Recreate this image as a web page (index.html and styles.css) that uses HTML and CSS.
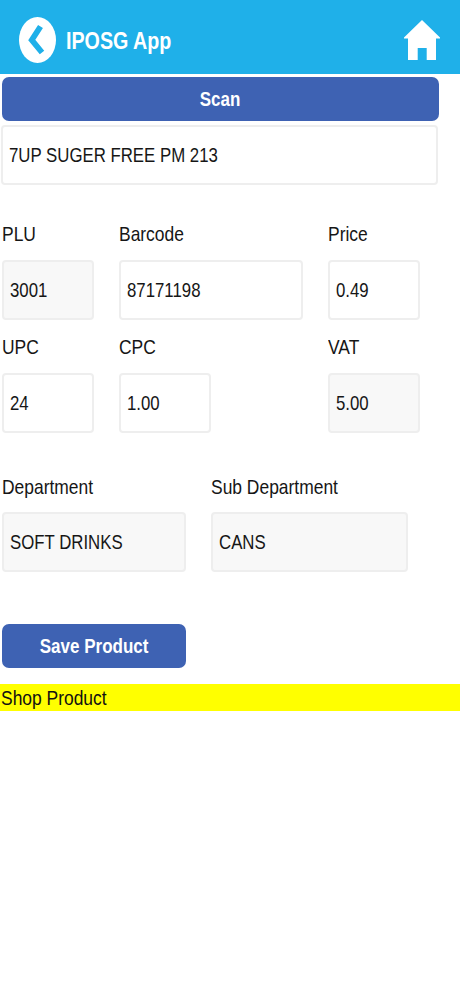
FILE: index.html
```html
<!DOCTYPE html>
<html lang="en">
<head>
<meta charset="utf-8">
<title>IPOSG App</title>
<link rel="stylesheet" href="styles.css">
</head>
<body>
<header class="topbar">
  <div class="topbar-left">
    <svg class="back-icon" viewBox="0 0 37 46" width="37" height="46" aria-hidden="true">
      <ellipse cx="18.5" cy="23" rx="18.5" ry="23" fill="#fff"/>
      <path d="M21.500 9.500 L12.800 23 L23 35.500" fill="none" stroke="#1fb0e9" stroke-width="5.800"/>
    </svg>
    <span class="app-title">IPOSG App</span>
  </div>
  <svg class="home-icon" viewBox="0 0 36 40" width="36" height="40" aria-hidden="true">
    <path fill="#fff" d="M18 0 L36 17.500 L36 18.500 L32 18.500 L32 40 L22.700 40 L22.700 28 L13.700 28 L13.700 40 L4 40 L4 18.500 L0 18.500 L0 17.500 Z"/>
  </svg>
</header>
<main class="content">
  <button class="btn btn-scan" type="button"><span class="btn-text">Scan</span></button>
  <div class="box box-name"><span class="val">7UP SUGER FREE PM 213</span></div>

  <section class="grid grid-top">
    <div class="field"><label class="lbl"><span class="lbl-text">PLU</span></label><div class="box box-small readonly"><span class="val">3001</span></div></div>
    <div class="field"><label class="lbl"><span class="lbl-text">Barcode</span></label><div class="box box-small"><span class="val">87171198</span></div></div>
    <div class="field"><label class="lbl"><span class="lbl-text">Price</span></label><div class="box box-small"><span class="val">0.49</span></div></div>
    <div class="field"><label class="lbl"><span class="lbl-text">UPC</span></label><div class="box box-small"><span class="val">24</span></div></div>
    <div class="field"><label class="lbl"><span class="lbl-text">CPC</span></label><div class="box box-small narrow"><span class="val">1.00</span></div></div>
    <div class="field"><label class="lbl"><span class="lbl-text">VAT</span></label><div class="box box-small readonly"><span class="val">5.00</span></div></div>
  </section>

  <section class="dept-row">
    <div class="field dept"><label class="lbl"><span class="lbl-text">Department</span></label><div class="box box-small readonly"><span class="val">SOFT DRINKS</span></div></div>
    <div class="field subdept"><label class="lbl"><span class="lbl-text">Sub Department</span></label><div class="box box-small readonly"><span class="val">CANS</span></div></div>
  </section>

  <button class="btn btn-save" type="button"><span class="btn-text">Save Product</span></button>
</main>
<div class="shop-bar"><span class="lbl-text">Shop Product</span></div>
</body>
</html>
```
FILE: styles.css
```css
* { box-sizing: border-box; }
html, body { margin: 0; padding: 0; background: #fff; }
body {
  width: 460px;
  height: 996px;
  overflow: hidden;
  font-family: "Liberation Sans", Arial, sans-serif;
  color: #161616;
}
.topbar {
  height: 74px;
  background: #1fb0e9;
  display: flex;
  align-items: center;
  justify-content: space-between;
  padding: 6px 20px 0 19px;
}
.topbar-left { display: flex; align-items: center; gap: 10px; }
.back-icon { display: block; }
.home-icon { display: block; }
.app-title {
  display: inline-block;
  color: #fff;
  font-size: 24px;
  font-weight: 700;
  margin-top: 2px;
  transform: scaleX(0.82);
  transform-origin: left center;
}
.content { padding: 3px 0 0 2px; }
.btn {
  display: flex;
  align-items: center;
  justify-content: center;
  height: 44px;
  padding: 0;
  border: 0;
  border-radius: 7px;
  background: #3e62b3;
  color: #fff;
  font-family: inherit;
  font-size: 21px;
  font-weight: 700;
}
.btn-text { display: inline-block; transform: scaleX(0.81); }
.btn-scan { width: 437px; }
.btn-save { width: 184px; margin-top: 52px; }
.box {
  display: flex;
  align-items: center;
  border: 2px solid #eeeeee;
  border-radius: 4px;
  background: #fff;
  padding-left: 6px;
  height: 60px;
}
.val {
  display: inline-block;
  font-size: 21px;
  transform: scaleX(0.8);
  transform-origin: left center;
}
.box-name { width: 437px; margin: 4px 0 0 -1px; }
.box-small { width: 100%; }
.readonly { background: #f8f8f8; }
.narrow { width: 92px; }
.lbl {
  display: block;
  height: 26px;
  line-height: 26px;
  font-size: 21px;
}
.lbl-text {
  display: inline-block;
  transform: scaleX(0.83);
  transform-origin: left center;
}
.field { display: flex; flex-direction: column; gap: 13px; }
.grid {
  display: grid;
  grid-template-columns: 92px 184px 92px;
  column-gap: 25px;
  row-gap: 14px;
}
.grid-top { margin-top: 36px; }
.dept-row { display: flex; gap: 25px; margin-top: 41px; }
.dept-row .field { gap: 12px; }
.dept { width: 184px; }
.subdept { width: 197px; }
.shop-bar {
  margin-top: 16px;
  height: 27px;
  line-height: 28px;
  background: #ffff00;
  color: #111;
  font-size: 21px;
  padding-left: 1px;
}
```
